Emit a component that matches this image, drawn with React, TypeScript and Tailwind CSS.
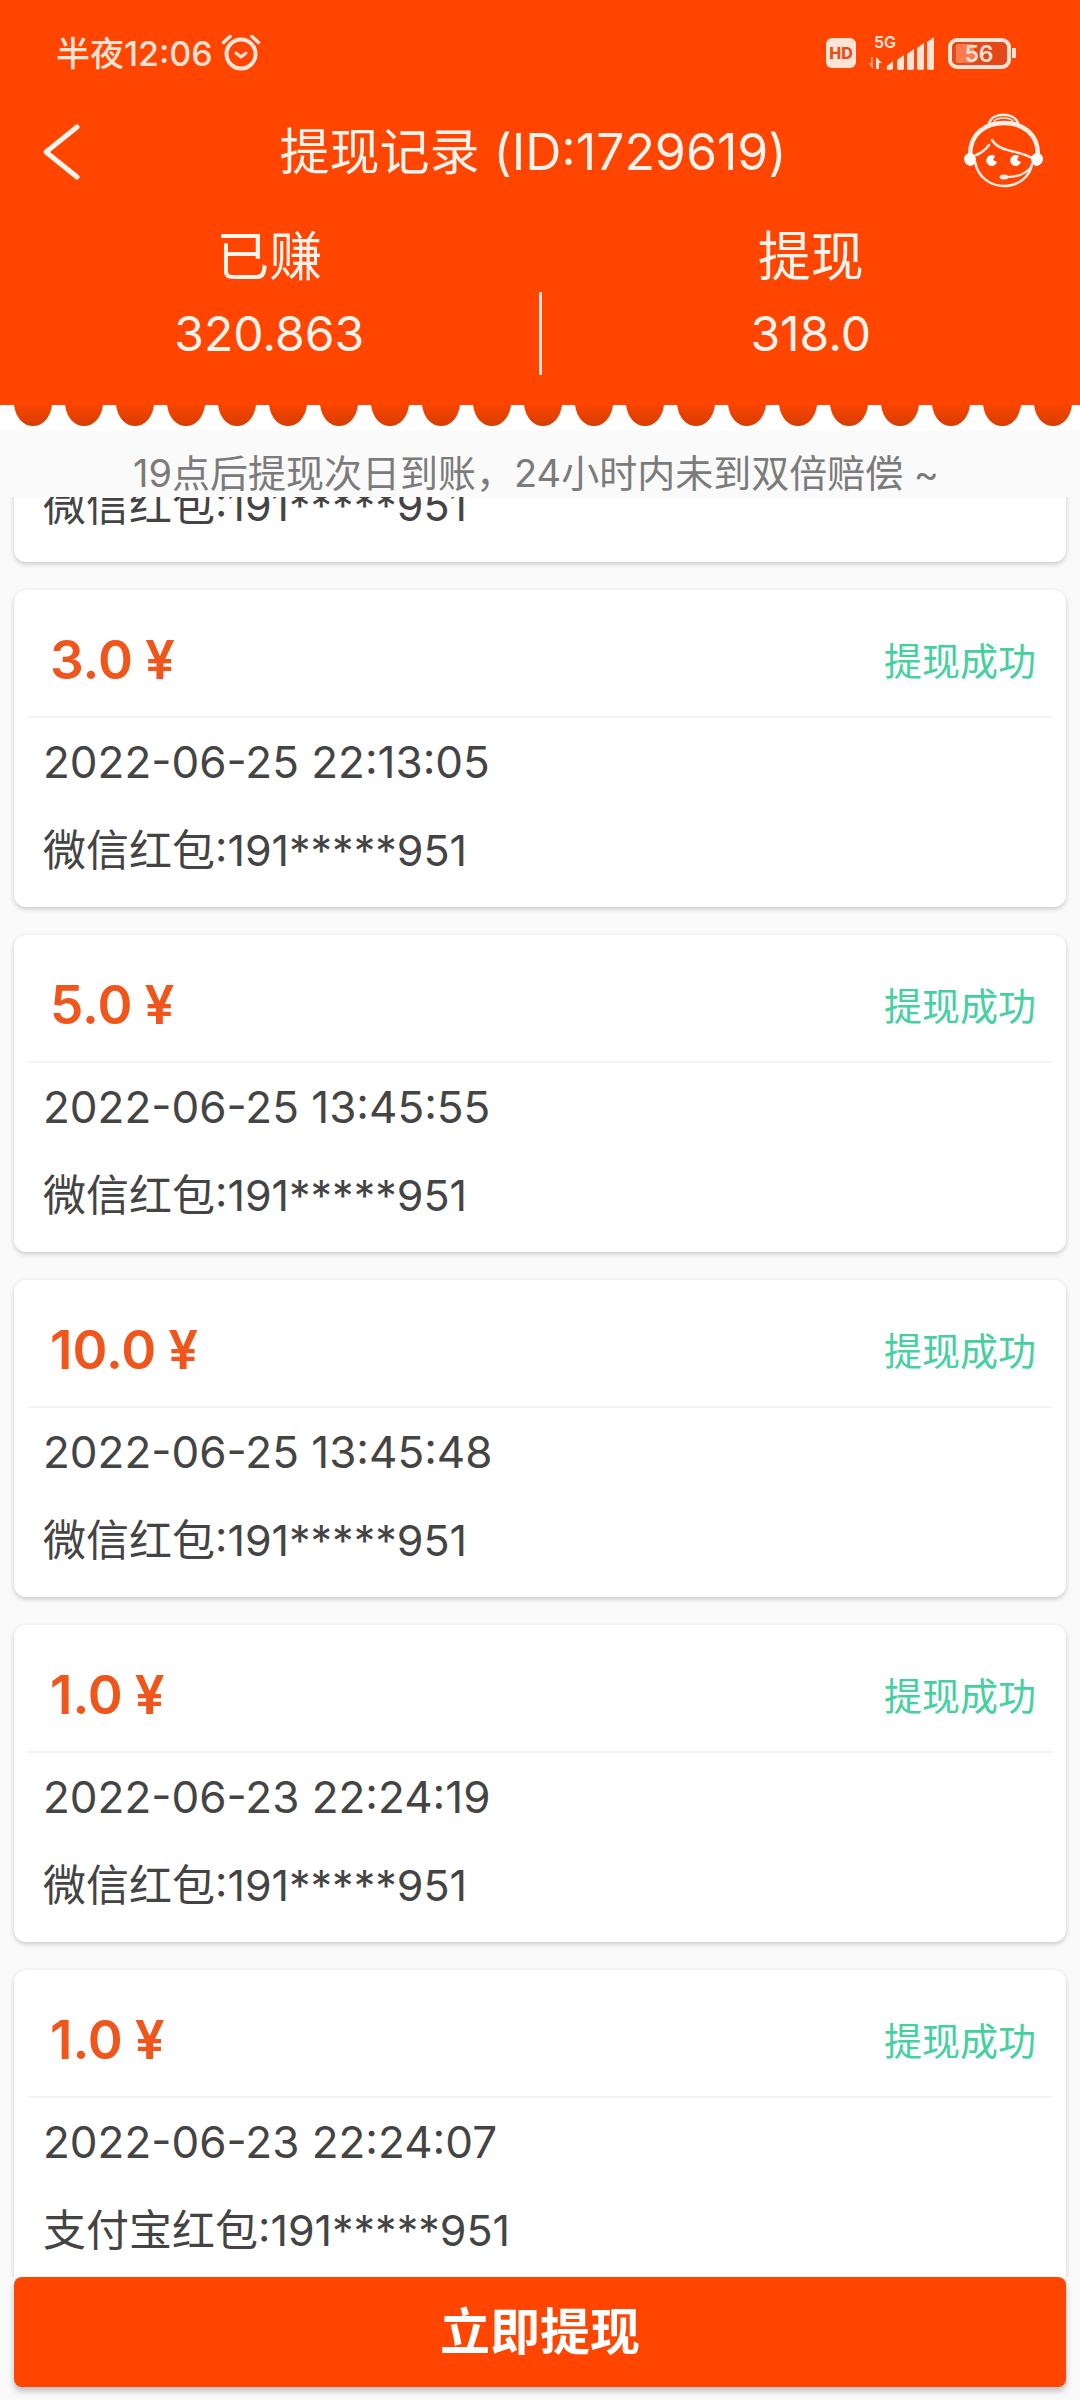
import { useLayoutEffect, useRef } from 'react';

interface WithdrawRecord {
    id: number;
    amount?: string;
    time?: string;
    channel: string;
    account: string;
}

const records: WithdrawRecord[] = [
    { id: 1, channel: '微信红包', account: '191*****951' },
    { id: 2, amount: '3.0', time: '2022-06-25 22:13:05', channel: '微信红包', account: '191*****951' },
    { id: 3, amount: '5.0', time: '2022-06-25 13:45:55', channel: '微信红包', account: '191*****951' },
    { id: 4, amount: '10.0', time: '2022-06-25 13:45:48', channel: '微信红包', account: '191*****951' },
    { id: 5, amount: '1.0', time: '2022-06-23 22:24:19', channel: '微信红包', account: '191*****951' },
    { id: 6, amount: '1.0', time: '2022-06-23 22:24:07', channel: '支付宝红包', account: '191*****951' },
];

function AlarmIcon() {
    return (
        <svg className="w-10 h-10" viewBox="0 0 40 40" fill="none" stroke="currentColor" strokeLinecap="round">
            <circle cx="20" cy="21" r="14.5" strokeWidth="4" />
            <path d="M15 20l5 4 5-4" strokeWidth="3" strokeLinejoin="round" />
            <path d="M2.5 9.5L9 3.5M37.5 9.5L31 3.5" strokeWidth="3.5" />
        </svg>
    );
}

function SignalIcon() {
    return (
        <svg className="w-[68px] h-9" viewBox="0 0 68 36" fill="currentColor">
            <text x="6" y="13" fontSize="16" fontWeight="600" fontFamily="Inter, sans-serif">5G</text>
            <path d="M5 22v12l-5-6h3v-6z" opacity="0.5" />
            <path d="M8 34V22l6 6h-3v6z" />
            <path d="M19 31l6-5v7q0 2-2 2h-3q-2 0-1-4z" />
            <path d="M29 25l7-5v13q0 2-2 2h-3q-2 0-2-2z" />
            <path d="M39 19l7-5v19q0 2-2 2h-3q-2 0-2-2z" />
            <path d="M49 13l7-5v25q0 2-2 2h-3q-2 0-2-2z" />
            <path d="M59 7l7-5v31q0 2-2 2h-3q-2 0-2-2z" />
        </svg>
    );
}

function BatteryIcon() {
    return (
        <svg className="w-[70px] h-8" viewBox="0 0 70 32">
            <rect x="2" y="3" width="59" height="27" rx="7" fill="#e2481c" stroke="#ffe4d6" strokeWidth="4" />
            <rect x="8" y="7" width="18" height="19" rx="2" fill="#ff7a4d" />
            <path d="M66 11v10" stroke="#ffe4d6" strokeWidth="4" />
            <text x="31" y="25" fontSize="23" fontWeight="600" textAnchor="middle" fill="#ffe4d6" fontFamily="Inter, sans-serif">56</text>
        </svg>
    );
}

function SupportIcon() {
    return (
        <svg className="w-20 h-20" viewBox="0 0 80 80" fill="none" stroke="#ffeee4" strokeLinecap="round">
            <path d="M25 11C29 0 50 0 54 11" strokeWidth="2.5" />
            <path d="M30 9C34 5 45 5 49 9" strokeWidth="1.5" />
            <path d="M6 43C6 21 22 11 40 11s34 10 34 32" strokeWidth="4.5" />
            <path d="M11 50C14 65 26 74 40 74s26-9 28-22" strokeWidth="2.5" />
            <path d="M12 43C18 41 22 37 25 33M28 28C36 41 56 38 68 46" strokeWidth="2.5" />
            <path d="M68 53C63 62 53 65 43 65" strokeWidth="2" />
            <ellipse cx="40" cy="65" rx="4.5" ry="2.5" fill="#ffeee4" stroke="none" />
            <path d="M6 41q-6 1-6 6t6 7q5 0 6-7-1-6-6-6zM73 41q6 1 6 6t-6 7q-5 0-6-7 1-6 6-6z" fill="#fff" stroke="none" />
            <path d="M31 44a5.500 5.500 0 1 0 2 6l-4-2zM55 44a5.500 5.500 0 1 0 2 6l-4-2z" fill="#fff" stroke="none" />
        </svg>
    );
}

function Scallops() {
    return (
        <svg className="block w-full bg-white" viewBox="0 0 1080 26" fill="url(#scallop)">
            <defs>
                <linearGradient id="scallop" gradientUnits="userSpaceOnUse" x1="0" y1="0" x2="0" y2="21">
                    <stop offset="0" stopColor="#f94400" />
                    <stop offset="1" stopColor="#d63e00" />
                </linearGradient>
            </defs>
            {Array.from({ length: 21 }, (_, i) => (
                <path key={i} d={`M${14 + i * 51} 0C${16 + i * 51} 14 ${24 + i * 51} 21 ${33 + i * 51} 21S${50 + i * 51} 14 ${52 + i * 51} 0z`} />
            ))}
        </svg>
    );
}

function RecordCard({ record }: { record: WithdrawRecord }) {
    return (
        <li className="shrink-0 bg-white rounded-xl shadow-[0_2px_5px_rgba(0,0,0,0.2)] px-[14px] pb-[13px]">
            {record.amount && (
                <div className="flex items-center justify-between h-32 pt-4 pl-[22px] pr-4 border-b-2 border-[#f4f4f4]">
                    <span className="text-[53px] font-semibold text-[#f0561b]">
                        {record.amount}<span className="pl-3">¥</span>
                    </span>
                    <span className="text-[38px] text-[#45d09f]">提现成功</span>
                </div>
            )}
            {record.time && <p className="pl-[15px] text-[44px] leading-[88px]">{record.time}</p>}
            <p className="pl-[15px] text-[43px] leading-[88px]">{record.channel}:{record.account}</p>
        </li>
    );
}

export default function App() {
    const listRef = useRef<HTMLUListElement>(null);

    // open the list slightly scrolled, with the first card partly under the notice
    useLayoutEffect(() => {
        if (listRef.current) {
            listRef.current.scrollTop = 36;
        }
    }, []);

    return (
        <div className="flex flex-col h-screen bg-[#fafafa] text-[#444] font-[Inter,'Noto_Sans_CJK_SC',sans-serif]">
            <header className="bg-[#ff4500] text-[#fff3ec]">
                <div className="flex items-center justify-between h-[106px] pl-14 pr-[62px] text-[#ffe4d6]">
                    <div className="flex items-center gap-2">
                        <span className="text-[34px] font-medium">半夜12:06</span>
                        <AlarmIcon />
                    </div>
                    <div className="flex items-center gap-3">
                        <span className="flex items-center justify-center w-[30px] h-[30px] rounded-md bg-[#ffe4d6] text-[#e0501c] text-[16px] font-extrabold">HD</span>
                        <SignalIcon />
                        <BatteryIcon />
                    </div>
                </div>

                <div className="flex items-center h-[92px] pl-[42px] pr-9">
                    <button aria-label="返回">
                        <svg className="w-10 h-14" viewBox="0 0 40 56" fill="none" stroke="currentColor" strokeWidth="5" strokeLinecap="round" strokeLinejoin="round">
                            <path d="M35 3L4 28l31 25" />
                        </svg>
                    </button>
                    <h1 className="flex-1 pl-5 text-center text-[50px]">提现记录 (ID:1729619)</h1>
                    <button aria-label="客服">
                        <SupportIcon />
                    </button>
                </div>

                <div className="flex items-end pt-5 pb-[30px] text-center">
                    <div className="flex-1 pb-[3px]">
                        <p className="text-[53px] leading-[78px]">已赚</p>
                        <p className="text-[48px] leading-[76px]">320.863</p>
                    </div>
                    <div className="w-[3px] h-[83px] bg-[#ffe4d6]" />
                    <div className="flex-1 pb-[3px]">
                        <p className="text-[53px] leading-[78px]">提现</p>
                        <p className="text-[48px] leading-[76px]">318.0</p>
                    </div>
                </div>
            </header>
            <Scallops />

            <p className="pt-[18px] pr-2 text-center text-[38px] leading-[48px] text-[#7b7b7b]">
                19点后提现次日到账，24小时内未到双倍赔偿 ~
            </p>

            <ul ref={listRef} className="flex flex-col flex-1 min-h-0 gap-7 px-[14px] overflow-y-auto [scrollbar-width:none]">
                {records.map((record) => (
                    <RecordCard key={record.id} record={record} />
                ))}
            </ul>

            <button className="mx-[14px] mb-[13px] h-[110px] shrink-0 rounded-lg bg-[#ff4500] text-white text-[50px] font-bold shadow-[0_4px_6px_rgba(0,0,0,0.25)]">
                立即提现
            </button>
        </div>
    );
}
